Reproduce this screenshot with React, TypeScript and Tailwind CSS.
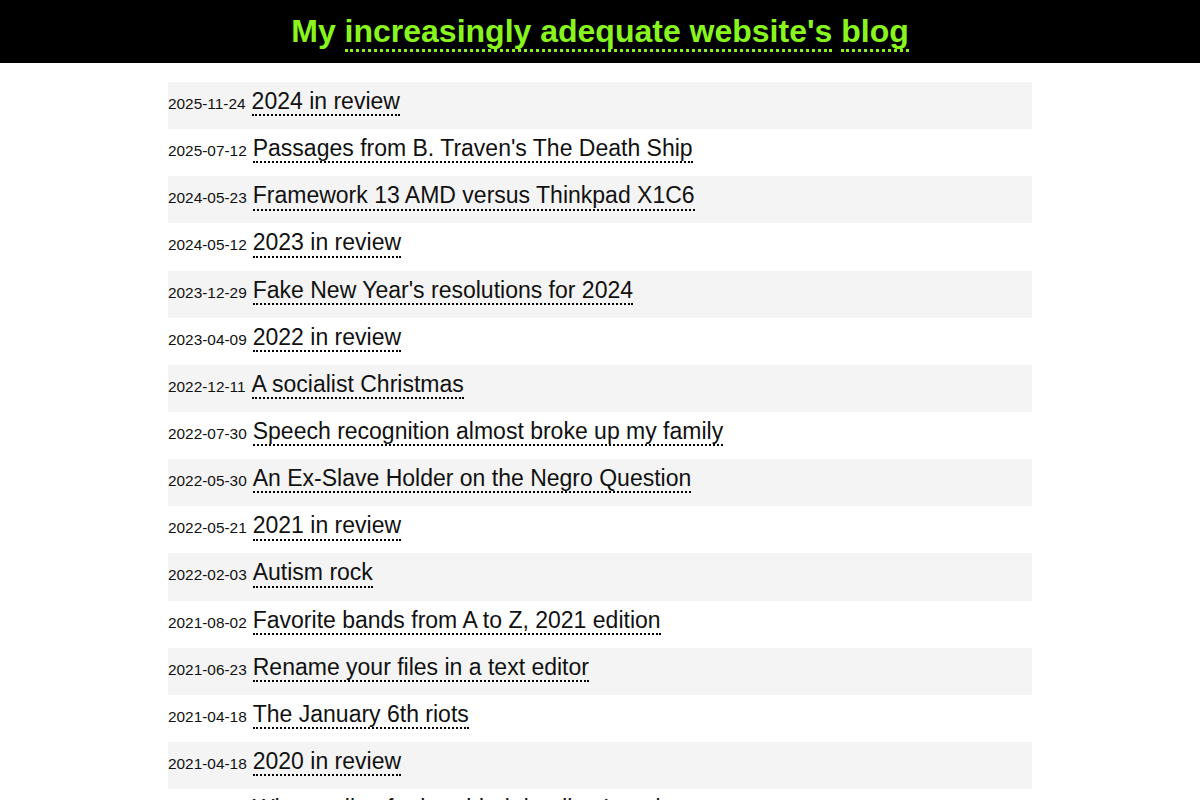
const posts: [string, string][] = [
  ["2025-11-24", "2024 in review"],
  ["2025-07-12", "Passages from B. Traven's The Death Ship"],
  ["2024-05-23", "Framework 13 AMD versus Thinkpad X1C6"],
  ["2024-05-12", "2023 in review"],
  ["2023-12-29", "Fake New Year's resolutions for 2024"],
  ["2023-04-09", "2022 in review"],
  ["2022-12-11", "A socialist Christmas"],
  ["2022-07-30", "Speech recognition almost broke up my family"],
  ["2022-05-30", "An Ex-Slave Holder on the Negro Question"],
  ["2022-05-21", "2021 in review"],
  ["2022-02-03", "Autism rock"],
  ["2021-08-02", "Favorite bands from A to Z, 2021 edition"],
  ["2021-06-23", "Rename your files in a text editor"],
  ["2021-04-18", "The January 6th riots"],
  ["2021-04-18", "2020 in review"],
  ["2021-01-10", "What a pile of ruler-aided doodles I made"],
  ["2020-11-02", "2019 in review"],
];

export default function App() {
  return (
    <div className="min-h-screen bg-white font-['Liberation_Sans',Arial,sans-serif] text-[#111]">
      {/* Site header */}
      <header className="flex h-[63px] items-center justify-center bg-black pb-[1px]">
        <h1 className="text-[32px] font-bold leading-none text-[#88f51d]">
          My{" "}
          <a href="#" className="border-b-[3px] border-dotted border-[#88f51d]">
            increasingly adequate website's
          </a>{" "}
          <a href="#" className="border-b-[3px] border-dotted border-[#88f51d]">
            blog
          </a>
        </h1>
      </header>

      {/* Post list */}
      <ul className="mx-auto mt-[19px] w-[864px]">
        {posts.map(([date, title], i) => (
          <li
            key={i}
            className={`flex h-[47.15px] items-baseline pt-[7px] ${i % 2 === 0 ? "bg-[#f4f4f4]" : "bg-white"}`}
          >
            <span className="mr-[6px] text-[15.4px]">{date}</span>
            <a href="#" className="border-b-2 border-dotted border-black text-[23px] leading-[1.1]">
              {title}
            </a>
          </li>
        ))}
      </ul>
    </div>
  );
}
